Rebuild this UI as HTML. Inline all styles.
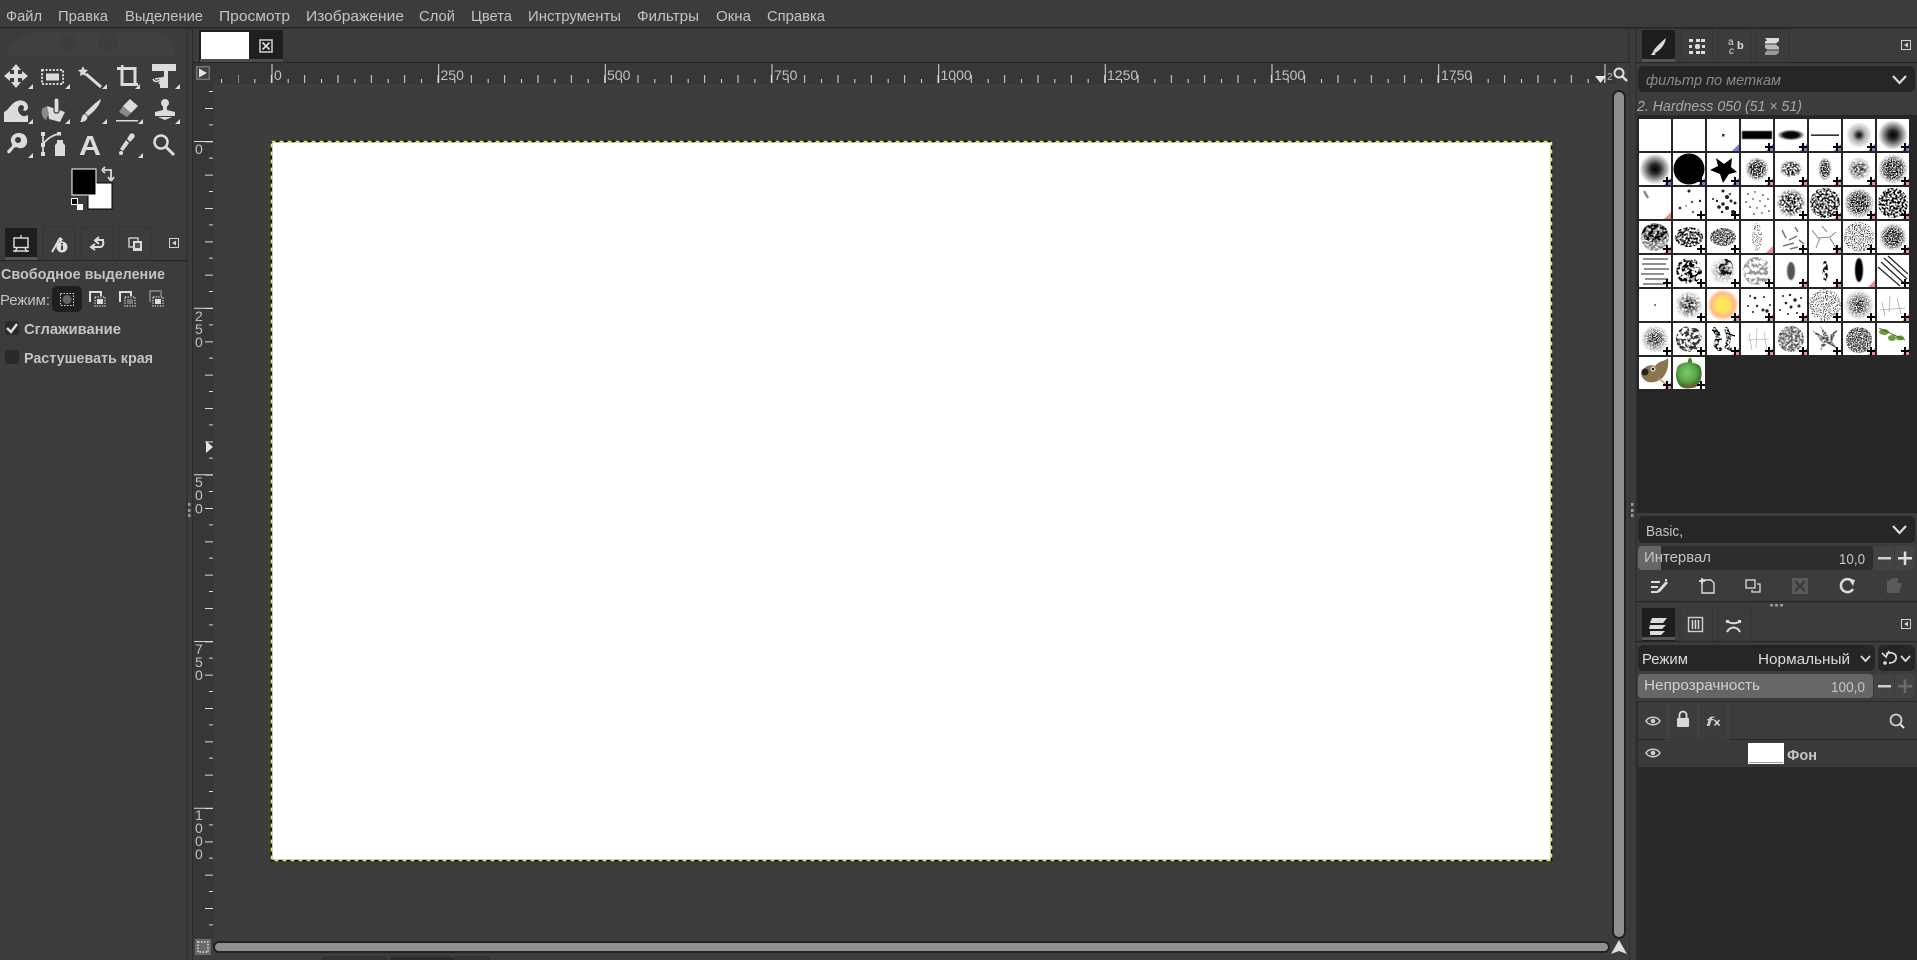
<!DOCTYPE html>
<html lang="ru"><head><meta charset="utf-8"><title>GNU Image Manipulation Program</title>
<style>
html,body{margin:0;padding:0;background:#3c3c3c;width:1917px;height:960px;overflow:hidden}
svg{display:block;position:absolute;left:0;top:0;font-family:"Liberation Sans","DejaVu Sans",sans-serif}
text{font-size:15px;fill:#c4c4c4}
.b{font-weight:bold}.i{font-style:italic}
.r{font-size:14px;fill:#bcc2c6}
.ic{fill:#dcdcdc}.st{fill:none;stroke:#dcdcdc}
</style></head><body>
<svg width="1917" height="960" viewBox="0 0 1917 960" xmlns="http://www.w3.org/2000/svg">
<defs>
<radialGradient id="s1"><stop offset="0" stop-color="#000"/><stop offset=".3" stop-color="#000" stop-opacity=".85"/><stop offset="1" stop-color="#000" stop-opacity="0"/></radialGradient>
<radialGradient id="s2"><stop offset="0" stop-color="#000"/><stop offset=".55" stop-color="#000" stop-opacity=".95"/><stop offset="1" stop-color="#000" stop-opacity="0"/></radialGradient>
<radialGradient id="s3"><stop offset="0" stop-color="#000"/><stop offset=".2" stop-color="#111" stop-opacity=".8"/><stop offset=".5" stop-color="#333" stop-opacity=".35"/><stop offset="1" stop-color="#000" stop-opacity="0"/></radialGradient>
<radialGradient id="sun"><stop offset="0" stop-color="#ffec5a"/><stop offset=".45" stop-color="#ffe060"/><stop offset=".75" stop-color="#ffb98a"/><stop offset="1" stop-color="#fff"/></radialGradient>
<radialGradient id="pep" cx=".45" cy=".4"><stop offset="0" stop-color="#7ccb70"/><stop offset=".7" stop-color="#5aa548"/><stop offset="1" stop-color="#3f7a35"/></radialGradient>
<filter id="f1" x="0" y="0" width="1" height="1" color-interpolation-filters="sRGB"><feTurbulence type="fractalNoise" baseFrequency=".8" numOctaves="2" seed="2" result="n"/><feColorMatrix in="n" values="0 0 0 0 0 0 0 0 0 0 0 0 0 0 0 7 0 0 0 -2.800" result="m"/><feComposite in="SourceGraphic" in2="m" operator="in"/><feGaussianBlur stdDeviation=".3"/></filter>
<filter id="f2" x="0" y="0" width="1" height="1" color-interpolation-filters="sRGB"><feTurbulence type="fractalNoise" baseFrequency=".5" numOctaves="2" seed="7" result="n"/><feColorMatrix in="n" values="0 0 0 0 0 0 0 0 0 0 0 0 0 0 0 9 0 0 0 -4" result="m"/><feComposite in="SourceGraphic" in2="m" operator="in"/><feGaussianBlur stdDeviation=".3"/></filter>
<filter id="f3" x="0" y="0" width="1" height="1" color-interpolation-filters="sRGB"><feTurbulence type="fractalNoise" baseFrequency=".28" numOctaves="2" seed="11" result="n"/><feColorMatrix in="n" values="0 0 0 0 0 0 0 0 0 0 0 0 0 0 0 8 0 0 0 -3.600" result="m"/><feComposite in="SourceGraphic" in2="m" operator="in"/><feGaussianBlur stdDeviation=".35"/></filter>
<filter id="f4" x="0" y="0" width="1" height="1" color-interpolation-filters="sRGB"><feTurbulence type="fractalNoise" baseFrequency=".45" numOctaves="3" seed="5" result="n"/><feColorMatrix in="n" values="0 0 0 0 0 0 0 0 0 0 0 0 0 0 0 3 0 0 0 -.9" result="m"/><feComposite in="SourceGraphic" in2="m" operator="in"/><feGaussianBlur stdDeviation=".35"/></filter>
<filter id="f5" x="0" y="0" width="1" height="1" color-interpolation-filters="sRGB"><feTurbulence type="fractalNoise" baseFrequency=".9" numOctaves="1" seed="13" result="n"/><feColorMatrix in="n" values="0 0 0 0 0 0 0 0 0 0 0 0 0 0 0 12 0 0 0 -6.400" result="m"/><feComposite in="SourceGraphic" in2="m" operator="in"/><feGaussianBlur stdDeviation=".25"/></filter>
<filter id="bl"><feGaussianBlur stdDeviation=".6"/></filter>
<g id="pl"><path d="M24 28h8M28 24v8" stroke="#000" stroke-width="2" fill="none"/></g>
<path id="tb" d="M25 32L32 25V32Z" fill="#6f7fd8"/>
<path id="tr" d="M25 32L32 25V32Z" fill="#e98d8d"/>
<path id="tri" d="M0 5L5 0V5Z" fill="#dcdcdc"/>
<g id="mn"><rect x=".5" y=".5" width="9" height="9" fill="none" stroke="#cfcfcf"/><path d="M7 2.500V7.500L3 5Z" fill="#cfcfcf"/></g>
<g id="eye"><path d="M-7 0C-4-5 4-5 7 0C4 5-4 5-7 0Z" fill="none" stroke="#ccc" stroke-width="1.500"/><circle r="2.300" fill="#ccc"/></g>
</defs>

<rect width="1917" height="960" fill="#3c3c3c"/>
<!-- menu -->
<rect x="0" y="27" width="1917" height="1.500" fill="#252525"/>
<text x="6" y="21" textLength="36" lengthAdjust="spacingAndGlyphs">Файл</text>
<text x="58" y="21" textLength="50" lengthAdjust="spacingAndGlyphs">Правка</text>
<text x="125" y="21" textLength="78" lengthAdjust="spacingAndGlyphs">Выделение</text>
<text x="219" y="21" textLength="71" lengthAdjust="spacingAndGlyphs">Просмотр</text>
<text x="306" y="21" textLength="98" lengthAdjust="spacingAndGlyphs">Изображение</text>
<text x="419" y="21" textLength="36" lengthAdjust="spacingAndGlyphs">Слой</text>
<text x="471" y="21" textLength="41" lengthAdjust="spacingAndGlyphs">Цвета</text>
<text x="528" y="21" textLength="93" lengthAdjust="spacingAndGlyphs">Инструменты</text>
<text x="637" y="21" textLength="62" lengthAdjust="spacingAndGlyphs">Фильтры</text>
<text x="716" y="21" textLength="35" lengthAdjust="spacingAndGlyphs">Окна</text>
<text x="767" y="21" textLength="58" lengthAdjust="spacingAndGlyphs">Справка</text>

<!-- faint wilber watermark -->
<path d="M8 56C10 38 30 30 50 32H150C172 32 176 44 175 56Z" fill="#404040"/>
<circle cx="68" cy="43" r="9" fill="#3d3d3d"/><circle cx="108" cy="43" r="10" fill="#3d3d3d"/>

<!-- tool icons -->
<path class="ic" d="M16 64L21 70H18V74H22V71L28 76L22 81V78H18V82H21L16 88L11 82H14V78H10V81L4 76L10 71V74H14V70H11Z"/>
<rect x="42" y="70" width="21" height="14" fill="none" stroke="#dcdcdc" stroke-width="2" stroke-dasharray="2 1.600"/><rect x="46" y="73.500" width="13" height="7" fill="#dcdcdc"/>
<path class="st" d="M86 74L101 87" stroke-width="3"/><path class="ic" d="M83 66L84.500 69.500L88 70L85.500 72.500L86 76L83 74.500L80 76L80.500 72.500L78 70L81.500 69.500Z"/>
<path class="st" d="M117 68.500H135V86M122 65V84.500H138" stroke-width="3"/><rect x="117" y="65" width="4" height="2" fill="#3c3c3c"/>
<path class="ic" d="M152 64H176V71H168V88H160V82L164 76V71H152Z"/><path class="st" d="M153 79C155 83 158 82 162 78M159 84L162 78L155 79" stroke-width="1.500"/>
<path class="ic" d="M4 122V112C9 110 11 103 17 101C22 99 28 102 28 107C28 110 25 112 23 110C25 108 24 105 21 105C17 106 17 112 21 115C23 117 26 116 28 115V122Z"/>
<path class="ic" d="M47 106L65 112L60 122L49 119Z"/><rect x="54" y="98" width="5" height="15" rx="2" fill="#dcdcdc" stroke="#3c3c3c" stroke-width="1.200"/><path d="M46 106L42 109C41 113 42 118 46 120L49 113Z" fill="#8a8a8a"/>
<path class="ic" d="M101 99C100 105 94 112 88 116L85 113C90 108 96 102 101 99Z"/><path class="ic" d="M84 114C87 115 88 117 87 119C85 122 82 122 80 122C82 120 81 116 84 114Z"/>
<path class="ic" d="M130 99L138 106L131 113L123 106Z"/><path d="M123 106L131 113L127 117L119 112Z" fill="#8a8a8a"/><rect x="116" y="120" width="22" height="1.500" fill="#dcdcdc"/>
<circle cx="165" cy="103" r="4" fill="#dcdcdc"/><path class="ic" d="M163 106H167V110L175 112V116H155V112L163 110Z"/><path d="M158 117H172L165 120Z" fill="#dcdcdc"/>
<path class="ic" fill-rule="evenodd" d="M19 133C25 133 28 138 27 143C26 147 22 149 19 148C17 147 15 147 14 148L10 153C8 154 6 152 8 150L12 146C13 144 10 142 11 139C12 135 15 133 19 133ZM18 137A3 3 0 1 0 18.100 137Z"/>
<path class="st" d="M43 135V155M43 144C47 139 52 135 59 134" stroke-width="1.700"/><rect x="41" y="132" width="4" height="4" fill="#dcdcdc"/><rect x="41" y="143" width="4" height="4" fill="#dcdcdc"/><rect x="41" y="152" width="4" height="4" fill="#dcdcdc"/><rect x="57" y="132" width="4" height="3.500" fill="#dcdcdc"/>
<path class="ic" d="M57 140H63V143L65 145V156H55V145L57 143Z"/>
<text x="79" y="155" class="b" style="font-size:28px;fill:#dcdcdc" textLength="22" lengthAdjust="spacingAndGlyphs">A</text>
<path class="ic" d="M130 134C133 132 136 135 134 138L130 142L127 139ZM126 140L129 143L123 151L120 149Z"/><circle cx="121" cy="153" r="2" fill="#dcdcdc"/>
<circle cx="161" cy="142" r="6.500" fill="none" stroke="#dcdcdc" stroke-width="2.500"/><path class="st" d="M166 147L174 155" stroke-width="3"/>
<use href="#tri" x="28" y="84"/><use href="#tri" x="65" y="84"/><use href="#tri" x="102" y="84"/><use href="#tri" x="135" y="84"/><use href="#tri" x="175" y="84"/>
<use href="#tri" x="28" y="119"/><use href="#tri" x="65" y="119"/><use href="#tri" x="102" y="119"/><use href="#tri" x="138" y="119"/><use href="#tri" x="175" y="119"/>
<use href="#tri" x="28" y="153"/><use href="#tri" x="138" y="153"/>

<!-- fg/bg -->
<rect x="88" y="183" width="24" height="26" fill="#fff" stroke="#000" stroke-width="1"/>
<rect x="72" y="169" width="24" height="26" fill="#000" stroke="#fff" stroke-width="1"/>
<path class="st" d="M104 170H111V179M102 170L105 167M102 170L105 173M111 181L108 177M111 181L114 177" stroke-width="1.800"/>
<rect x="77" y="204" width="6" height="6" fill="#fff"/><rect x="71.500" y="198.500" width="6" height="6" fill="#000" stroke="#fff"/>

<!-- tool option tabs -->
<rect x="0" y="260" width="187" height="1.200" fill="#252525"/>
<rect x="5" y="228" width="32" height="32" fill="#1e1e1e"/><rect x="5" y="257" width="32" height="3" fill="#555"/>
<g fill="none" stroke="#3c3c3c"><rect x="43" y="227" width="32" height="34" stroke="#333"/><rect x="81" y="227" width="32" height="34" stroke="#333"/><rect x="119" y="227" width="32" height="34" stroke="#333"/></g>
<rect x="14" y="238" width="14" height="9.500" fill="none" stroke="#e0e0e0" stroke-width="1.400"/><path class="st" d="M13 251H29M17 248L15 252M25 248L27 252M21 235V238" stroke-width="1.400"/>
<path class="st" d="M52 252L60 238" stroke-width="2"/><path class="ic" d="M60 237L63 239L61 242L58.500 241Z"/><circle cx="62" cy="247" r="5.500" fill="#e0e0e0"/><rect x="61" y="245.500" width="2" height="4.500" fill="#3c3c3c"/><rect x="61" y="243" width="2" height="1.500" fill="#3c3c3c"/>
<path class="st" d="M104 240H96M99 237L95 240.500L99 244M92 247H100C104 247 104 241 102 240M95 244L91 247L95 250" stroke-width="2"/>
<rect x="129" y="238" width="9" height="9" fill="none" stroke="#dcdcdc" stroke-width="1.300"/><rect x="133" y="241" width="9" height="10" fill="#dcdcdc"/><rect x="135" y="243" width="5" height="5" fill="#555"/>
<use href="#mn" x="169" y="238"/>

<!-- tool options -->
<text x="1" y="279" class="b" textLength="164" lengthAdjust="spacingAndGlyphs">Свободное выделение</text>
<text x="0" y="305" textLength="50" lengthAdjust="spacingAndGlyphs">Режим:</text>
<rect x="52" y="286" width="30" height="26" rx="5" fill="#1f1f1f"/>
<rect x="60.500" y="293.500" width="13" height="12" fill="none" stroke="#ddd" stroke-dasharray="1.500 1.500"/><circle cx="67" cy="299.500" r="4.500" fill="#666"/>
<g fill="none" stroke-width="1.200">
<path d="M90 302V292H101V296" stroke="#ddd" stroke-width="2"/><rect x="95" y="297" width="10" height="9" stroke="#ddd" stroke-dasharray="1.300 1.300"/><rect x="97" y="299" width="6" height="5" fill="#ddd" stroke="none"/>
<path d="M120 302V292H131V296" stroke="#ddd" stroke-width="2"/><rect x="125" y="297" width="10" height="9" stroke="#ddd" stroke-dasharray="1.300 1.300"/><rect x="127" y="299" width="6" height="5" fill="#777" stroke="none"/>
<path d="M150 302V291H161V296" stroke="#777" stroke-width="2"/><rect x="153" y="297" width="10" height="9" stroke="#ddd" stroke-dasharray="1.300 1.300"/><rect x="155" y="299" width="6" height="5" fill="#ddd" stroke="none"/>
</g>
<rect x="5" y="321" width="14" height="14" rx="3" fill="#292929"/><path class="st" d="M7 328L11 332L17 324" stroke-width="2.500"/>
<text x="24" y="334" class="b" textLength="97" lengthAdjust="spacingAndGlyphs">Сглаживание</text>
<rect x="5" y="350" width="14" height="14" rx="3" fill="#292929"/>
<text x="24" y="363" class="b" textLength="129" lengthAdjust="spacingAndGlyphs">Растушевать края</text>

<!-- sashes -->
<rect x="186.500" y="28" width="1" height="932" fill="#2a2a2a"/>
<rect x="192" y="28" width="1" height="932" fill="#2a2a2a"/>
<g fill="#999"><rect x="188" y="503" width="2.500" height="3"/><rect x="188" y="509" width="2.500" height="3"/><rect x="188" y="514" width="2.500" height="3"/>
<rect x="1631" y="503" width="2.500" height="3"/><rect x="1631" y="509" width="2.500" height="3"/><rect x="1631" y="514" width="2.500" height="3"/></g>
<rect x="1628.500" y="28" width="1" height="932" fill="#2a2a2a"/>
<rect x="1635.500" y="28" width="1" height="932" fill="#2a2a2a"/>

<!-- image tab -->
<rect x="193" y="62" width="1436" height="1.200" fill="#252525"/>
<rect x="199" y="30" width="84" height="32" fill="#1f1f1f"/><rect x="200" y="59" width="83" height="3" fill="#4c4c4c"/>
<rect x="201" y="32" width="48" height="27" fill="#fff"/>
<rect x="260" y="40" width="12" height="12" fill="none" stroke="#c8c8c8" stroke-width="1.600"/><path class="st" d="M262.500 42.500L269.500 49.500M269.500 42.500L262.500 49.500" stroke-width="1.600"/>

<!-- canvas area -->
<rect x="193" y="63" width="1436" height="897" fill="#3d3d3d"/>
<rect x="193" y="63" width="1423" height="21" fill="#373737"/>
<rect x="193" y="84" width="21" height="854" fill="#373737"/>
<rect x="196" y="66" width="14" height="14" fill="#6a6a6a"/><rect x="197" y="67" width="12" height="12" fill="#404040" stroke="#999" stroke-width=".5"/><path d="M199 68.500V77.500L207 73Z" fill="#e4e4e4"/>
<!-- top ruler ticks -->
<line x1="238" y1="79" x2="1608" y2="79" stroke="#d8d8d8" stroke-width="8" stroke-dasharray="1 32.333" stroke-dashoffset=".5"/>
<line x1="221" y1="81" x2="1608" y2="81" stroke="#d8d8d8" stroke-width="4" stroke-dasharray="1 32.333"/>
<path d="M272 64V83M438.700 64V83M605.300 64V83M772 64V83M938.700 64V83M1105.300 64V83M1272 64V83M1438.700 64V83M1605 64V83" stroke="#d8d8d8" stroke-width="1"/>
<g>
<text class="r" x="274" y="80">0</text><text class="r" x="440.500" y="80">250</text><text class="r" x="607" y="80">500</text><text class="r" x="774" y="80">750</text><text class="r" x="940.500" y="80">1000</text><text class="r" x="1107" y="80">1250</text><text class="r" x="1274" y="80">1500</text><text class="r" x="1441" y="80">1750</text>
</g>
<rect x="1607" y="64" width="9" height="19" fill="#373737"/><text class="r" x="1607" y="80" style="font-size:10px">2</text>
<path d="M1595 76H1606L1600.500 83Z" fill="#e4e4e4"/>
<circle cx="1619" cy="73" r="4.500" fill="none" stroke="#e0e0e0" stroke-width="2"/><path class="st" d="M1622 76L1627 81" stroke-width="2.500"/>
<!-- left ruler ticks -->
<line x1="211" y1="91" x2="211" y2="938" stroke="#d8d8d8" stroke-width="4" stroke-dasharray="1 32.333"/>
<line x1="209" y1="108" x2="209" y2="938" stroke="#d8d8d8" stroke-width="8" stroke-dasharray="1 32.333"/>
<path d="M194 141.500H213M194 308.200H213M194 474.800H213M194 641.500H213M194 808.200H213" stroke="#d8d8d8" stroke-width="1"/>
<text class="r" x="195" y="154">0</text>
<text class="r" x="195" y="321">2</text><text class="r" x="195" y="334">5</text><text class="r" x="195" y="347">0</text>
<text class="r" x="195" y="487">5</text><text class="r" x="195" y="500">0</text><text class="r" x="195" y="513.500">0</text>
<text class="r" x="195" y="654">7</text><text class="r" x="195" y="667">5</text><text class="r" x="195" y="680">0</text>
<text class="r" x="195" y="820">1</text><text class="r" x="195" y="833">0</text><text class="r" x="195" y="846">0</text><text class="r" x="195" y="859">0</text>
<path d="M206 441V453L213 447Z" fill="#e4e4e4"/>

<!-- image -->
<rect x="271.500" y="141.500" width="1280" height="719" fill="#fff"/>
<rect x="271.500" y="141.500" width="1280" height="719" fill="none" stroke="#000" stroke-width="1.500"/>
<rect x="271.500" y="141.500" width="1280" height="719" fill="none" stroke="#e9f03a" stroke-width="1.500" stroke-dasharray="4 4"/>

<!-- scrollbars -->
<rect x="1613" y="91" width="12" height="847" rx="6" fill="#8f8f8f" stroke="#222" stroke-width="2"/>
<rect x="214" y="942" width="1395" height="10" rx="5" fill="#8f8f8f" stroke="#222" stroke-width="2"/>
<rect x="195" y="939" width="16" height="16" fill="#6a6a6a"/><rect x="198" y="942" width="10" height="10" fill="none" stroke="#ddd" stroke-width="1.500" stroke-dasharray="1.500 1.500"/>
<path d="M1619 940L1627 954L1619 951L1611 954Z" fill="#dedede"/>
<rect x="322" y="957" width="65" height="6" rx="4" fill="#353535" stroke="#2a2a2a"/><rect x="390" y="957" width="63" height="6" rx="4" fill="#2a2a2a" stroke="#2a2a2a"/><rect x="453" y="957" width="37" height="6" rx="4" fill="#353535" stroke="#2a2a2a"/>

<!-- right dock 1 tabs -->
<rect x="1636" y="62" width="281" height="1.200" fill="#252525"/>
<rect x="1642" y="30" width="33" height="32" fill="#1e1e1e"/><rect x="1642" y="59" width="33" height="3" fill="#555"/>
<g fill="none" stroke="#333"><rect x="1680" y="29" width="33" height="33"/><rect x="1718" y="29" width="33" height="33"/><rect x="1756" y="29" width="33" height="33"/></g>
<path class="ic" d="M1666 38C1665 44 1661 50 1655 53L1653 51C1657 46 1661 42 1666 38Z"/><path class="ic" d="M1653 52C1655 52 1656 54 1655 55L1651 55C1652 54 1652 53 1653 52Z"/>
<g fill="#dcdcdc"><rect x="1689" y="39" width="4" height="3"/><rect x="1696" y="39" width="4" height="3"/><rect x="1701" y="39" width="4" height="3"/><rect x="1689" y="45" width="3" height="3"/><rect x="1695" y="44" width="5" height="5" rx="2"/><rect x="1702" y="45" width="3" height="3"/><rect x="1689" y="51" width="4" height="3"/><rect x="1696" y="51" width="4" height="3"/><rect x="1701" y="51" width="4" height="3"/></g>
<text x="1728" y="45" style="font-size:10px;fill:#dcdcdc">a</text><text x="1737" y="49" class="b" style="font-size:11px;fill:#dcdcdc">b</text><text x="1729" y="54" class="i" style="font-size:10px;fill:#dcdcdc">c</text>
<path class="ic" d="M1765 38H1779V41L1776 43.500H1765V41.500L1767 40.500Z"/><path d="M1765 44.500H1776L1779 47V49.500H1767L1765 47.500Z" fill="#bbb"/><path d="M1767 50.500H1779V52.500L1776 55H1765V52.500Z" fill="#999"/>
<use href="#mn" x="1901" y="40"/>

<rect x="1638" y="66" width="277" height="26" rx="5" fill="#262626"/>
<text x="1646" y="85" class="i" style="fill:#8a8a8a" textLength="135" lengthAdjust="spacingAndGlyphs">фильтр по меткам</text>
<path class="st" d="M1893 76L1899.500 83L1906 76" stroke-width="2.200"/>
<text x="1637" y="111" class="i" style="fill:#a8a8a8" textLength="165" lengthAdjust="spacingAndGlyphs">2. Hardness 050 (51 × 51)</text>

<!-- brush grid background -->
<rect x="1637" y="115" width="280" height="398" fill="#262626"/>
<g fill="#fff">
<rect x="1639" y="119" width="32" height="32"/><rect x="1673" y="119" width="32" height="32"/><rect x="1707" y="119" width="32" height="32"/><rect x="1741" y="119" width="32" height="32"/><rect x="1775" y="119" width="32" height="32"/><rect x="1809" y="119" width="32" height="32"/><rect x="1843" y="119" width="32" height="32"/><rect x="1877" y="119" width="32" height="32"/>
<rect x="1639" y="153" width="32" height="32"/><rect x="1673" y="153" width="32" height="32"/><rect x="1707" y="153" width="32" height="32"/><rect x="1741" y="153" width="32" height="32"/><rect x="1775" y="153" width="32" height="32"/><rect x="1809" y="153" width="32" height="32"/><rect x="1843" y="153" width="32" height="32"/><rect x="1877" y="153" width="32" height="32"/>
<rect x="1639" y="187" width="32" height="32"/><rect x="1673" y="187" width="32" height="32"/><rect x="1707" y="187" width="32" height="32"/><rect x="1741" y="187" width="32" height="32"/><rect x="1775" y="187" width="32" height="32"/><rect x="1809" y="187" width="32" height="32"/><rect x="1843" y="187" width="32" height="32"/><rect x="1877" y="187" width="32" height="32"/>
<rect x="1639" y="221" width="32" height="32"/><rect x="1673" y="221" width="32" height="32"/><rect x="1707" y="221" width="32" height="32"/><rect x="1741" y="221" width="32" height="32"/><rect x="1775" y="221" width="32" height="32"/><rect x="1809" y="221" width="32" height="32"/><rect x="1843" y="221" width="32" height="32"/><rect x="1877" y="221" width="32" height="32"/>
<rect x="1639" y="255" width="32" height="32"/><rect x="1673" y="255" width="32" height="32"/><rect x="1707" y="255" width="32" height="32"/><rect x="1741" y="255" width="32" height="32"/><rect x="1775" y="255" width="32" height="32"/><rect x="1809" y="255" width="32" height="32"/><rect x="1843" y="255" width="32" height="32"/><rect x="1877" y="255" width="32" height="32"/>
<rect x="1639" y="289" width="32" height="32"/><rect x="1673" y="289" width="32" height="32"/><rect x="1707" y="289" width="32" height="32"/><rect x="1741" y="289" width="32" height="32"/><rect x="1775" y="289" width="32" height="32"/><rect x="1809" y="289" width="32" height="32"/><rect x="1843" y="289" width="32" height="32"/><rect x="1877" y="289" width="32" height="32"/>
<rect x="1639" y="323" width="32" height="32"/><rect x="1673" y="323" width="32" height="32"/><rect x="1707" y="323" width="32" height="32"/><rect x="1741" y="323" width="32" height="32"/><rect x="1775" y="323" width="32" height="32"/><rect x="1809" y="323" width="32" height="32"/><rect x="1843" y="323" width="32" height="32"/><rect x="1877" y="323" width="32" height="32"/>
<rect x="1639" y="357" width="32" height="32"/><rect x="1673" y="357" width="32" height="32"/>
</g>
<!-- row 0 -->
<rect x="1722" y="134" width="2.500" height="2.500" fill="#333"/>
<rect x="1742" y="131" width="30" height="8" fill="#000" filter="url(#bl)"/>
<ellipse cx="1791" cy="135" rx="14" ry="5.500" fill="url(#s2)"/>
<rect x="1811" y="134.500" width="28" height="1.300" fill="#000"/>
<circle cx="1859" cy="135" r="13" fill="url(#s3)"/>
<circle cx="1893" cy="135" r="15" fill="url(#s1)"/>
<!-- row 1 -->
<circle cx="1655" cy="169" r="15.500" fill="url(#s1)"/>
<circle cx="1689" cy="169" r="15.500" fill="#000"/>
<path d="M1716 158L1724 164L1732 158L1731 167L1737 172L1729 174L1723 183L1720 174L1710 170L1718 166Z" fill="#000"/>
<circle cx="1757" cy="169" r="12" fill="url(#s2)" filter="url(#f1)"/>
<ellipse cx="1791" cy="169" rx="12" ry="9" fill="url(#s2)" filter="url(#f2)"/>
<ellipse cx="1825" cy="169" rx="7" ry="12" fill="url(#s2)" filter="url(#f1)"/>
<circle cx="1859" cy="169" r="12" fill="url(#s1)" filter="url(#f4)"/>
<circle cx="1893" cy="169" r="15" fill="url(#s2)" filter="url(#f1)"/>
<!-- row 2 -->
<path d="M1644 191L1648 198" stroke="#888" stroke-width="2.500"/>
<g fill="#222"><circle cx="1689" cy="191" r="1.500"/><circle cx="1680" cy="208" r="1.300"/><circle cx="1686" cy="206" r=".9" fill="#777"/><circle cx="1692" cy="202" r="1.200" fill="#555"/><circle cx="1700" cy="201" r="1.200"/><circle cx="1693" cy="212" r="1.200" fill="#666"/></g>
<g fill="#222"><circle cx="1723" cy="191" r="1.500"/><circle cx="1730" cy="194" r="1.300" fill="#666"/><circle cx="1727" cy="197" r="2"/><circle cx="1717" cy="201" r="1.200"/><circle cx="1723" cy="204" r="1.700"/><circle cx="1731" cy="201" r="1.500"/><circle cx="1719" cy="207" r="1.800"/><circle cx="1727" cy="208" r="2"/><circle cx="1733" cy="212" r="2"/><circle cx="1722" cy="212" r="1.200"/><circle cx="1713" cy="199" r="1"/><circle cx="1735" cy="203" r="1.500"/></g>
<g fill="#000"><circle cx="1748" cy="194" r=".8"/><circle cx="1755" cy="192" r=".7"/><circle cx="1763" cy="195" r=".8"/><circle cx="1746" cy="202" r=".8"/><circle cx="1753" cy="199" r=".7"/><circle cx="1760" cy="201" r=".7"/><circle cx="1768" cy="199" r=".8"/><circle cx="1750" cy="207" r=".8"/><circle cx="1757" cy="208" r=".7"/><circle cx="1765" cy="206" r=".8"/><circle cx="1754" cy="214" r=".8"/><circle cx="1762" cy="213" r=".7"/><circle cx="1769" cy="211" r=".8"/></g>
<circle cx="1791" cy="203" r="15" fill="url(#s2)" filter="url(#f2)"/>
<circle cx="1825" cy="203" r="15" fill="#111" filter="url(#f2)"/>
<circle cx="1859" cy="203" r="15" fill="url(#s2)" filter="url(#f1)"/>
<circle cx="1893" cy="203" r="15" fill="#000" filter="url(#f2)"/>
<!-- row 3 -->
<circle cx="1655" cy="237" r="14" fill="#777" filter="url(#f4)"/><ellipse cx="1655" cy="233" rx="13" ry="9" fill="#000" filter="url(#f3)"/>
<ellipse cx="1689" cy="237" rx="14" ry="10" fill="#000" filter="url(#f2)"/>
<ellipse cx="1723" cy="237" rx="13" ry="9" fill="#333" filter="url(#f1)"/>
<ellipse cx="1757" cy="237" rx="5" ry="14" fill="#555" filter="url(#f5)"/>
<g stroke="#777" stroke-width="1.500"><path d="M1782 230L1786 238M1795 227L1798 232M1789 240L1797 236M1799 240L1804 244M1783 246L1794 243M1798 247L1790 249"/></g>
<g stroke="#888" fill="none" stroke-width="1"><path d="M1812 230L1818 238L1830 237L1836 232M1820 238L1816 248M1830 238L1836 248M1822 226L1827 232"/></g>
<circle cx="1859" cy="237" r="15" fill="#222" filter="url(#f5)"/>
<circle cx="1893" cy="237" r="14" fill="url(#s2)" filter="url(#f1)"/>
<!-- row 4 -->
<path d="M1643 259H1668M1642 264H1666M1644 269H1669M1641 274H1664M1645 279H1668M1643 284H1665" stroke="#222" stroke-width="1.100" fill="none"/>
<circle cx="1689" cy="271" r="13" fill="#000" filter="url(#f3)"/>
<circle cx="1723" cy="271" r="14" fill="url(#s3)" filter="url(#f4)"/><ellipse cx="1726" cy="268" rx="7" ry="9" fill="#111" filter="url(#f3)"/>
<circle cx="1757" cy="271" r="14" fill="#999" filter="url(#f3)"/>
<ellipse cx="1791" cy="271" rx="4" ry="9" fill="#555" filter="url(#bl)"/>
<ellipse cx="1825" cy="271" rx="3" ry="10" fill="#000" filter="url(#f3)"/>
<ellipse cx="1859" cy="270" rx="4" ry="12" fill="#000" filter="url(#bl)"/>
<path d="M1878 267L1900 286M1881 262L1904 283M1884 258L1907 279M1888 256L1908 274" stroke="#222" stroke-width="1.200"/>
<!-- row 5 -->
<circle cx="1655" cy="305" r=".9" fill="#222"/>
<circle cx="1689" cy="305" r="14" fill="url(#s1)" filter="url(#f4)"/>
<rect x="1707" y="289" width="32" height="32" fill="#fff"/><circle cx="1723" cy="305" r="16" fill="url(#sun)"/>
<g fill="#222"><circle cx="1750" cy="296" r="1"/><circle cx="1755" cy="298" r="1.300"/><circle cx="1764" cy="297" r="1"/><circle cx="1748" cy="306" r="1"/><circle cx="1757" cy="306" r="1.200"/><circle cx="1763" cy="310" r="1.500"/><circle cx="1767" cy="311" r="1.700"/><circle cx="1753" cy="312" r="1"/><circle cx="1770" cy="305" r="1"/></g>
<g fill="#222"><circle cx="1783" cy="296" r="1"/><circle cx="1790" cy="295" r="1.200"/><circle cx="1786" cy="303" r="1.300"/><circle cx="1795" cy="300" r="1.700"/><circle cx="1799" cy="306" r="1.500"/><circle cx="1791" cy="307" r="1.500"/><circle cx="1780" cy="310" r="1"/><circle cx="1788" cy="314" r="1"/><circle cx="1797" cy="313" r="1"/><circle cx="1801" cy="298" r="1"/></g>
<circle cx="1825" cy="305" r="16" fill="#333" filter="url(#f5)"/>
<circle cx="1859" cy="305" r="15" fill="url(#s1)" filter="url(#f1)"/>
<path d="M1882 302L1885 316M1890 296L1889 312M1897 298L1901 314M1880 310L1905 308" stroke="#aaa" stroke-width=".8" fill="none"/>
<!-- row 6 -->
<circle cx="1655" cy="339" r="14" fill="url(#s1)" filter="url(#f1)"/>
<circle cx="1689" cy="339" r="13" fill="#333" filter="url(#f3)"/>
<path d="M1713 327L1718 335L1716 345L1721 351M1725 327L1729 336L1727 347L1732 350" stroke="#000" stroke-width="4.500" fill="none" filter="url(#f2)"/>
<path d="M1712 330L1720 333M1726 333L1735 336M1715 340L1722 339" stroke="#000" stroke-width="1.300"/>
<path d="M1749 333L1752 350M1757 328L1756 348M1764 332L1767 352M1747 340L1769 339" stroke="#bbb" stroke-width=".8" fill="none"/>
<circle cx="1791" cy="339" r="13" fill="#555" filter="url(#f4)"/>
<path d="M1812 330L1824 337L1820 326L1829 336L1838 329L1832 341L1838 350L1827 343L1820 352L1822 342Z" fill="#444" filter="url(#f4)"/>
<circle cx="1859" cy="340" r="13" fill="#333" filter="url(#f1)"/>
<g fill="#6a9d3f"><ellipse cx="1884" cy="332" rx="5" ry="3"/><ellipse cx="1892" cy="338" rx="4" ry="3"/><ellipse cx="1900" cy="338" rx="4" ry="2.500"/></g><path d="M1879 328L1905 340" stroke="#335a22" stroke-width=".8"/>
<!-- row 7 wilber + pepper -->
<path d="M1641 373C1644 366 1650 364 1655 366C1660 360 1664 362 1668 358C1669 366 1667 372 1664 376C1660 382 1650 384 1646 381C1643 379 1641 376 1641 373Z" fill="#8a7750"/>
<circle cx="1645" cy="372" r="3.500" fill="#222"/><circle cx="1653" cy="369" r="2.500" fill="#ddd"/><circle cx="1653" cy="369" r="1.200" fill="#111"/>
<path d="M1658 378L1667 385" stroke="#c99a50" stroke-width="1.500"/>
<path d="M1688 360L1690 357L1692 360V364H1688Z" fill="#3d8a2f"/>
<path d="M1678 366C1683 361 1694 361 1700 366C1703 372 1702 382 1696 387C1691 389 1683 389 1680 386C1675 380 1675 372 1678 366Z" fill="url(#pep)"/>
<path d="M1684 385C1690 388 1694 386 1696 382C1700 385 1692 389 1684 388Z" fill="#8a4a30"/>
<!-- corners -->
<use href="#tb" x="1707" y="119"/><use href="#tb" x="1741" y="119"/><use href="#tb" x="1775" y="119"/><use href="#tb" x="1809" y="119"/><use href="#tb" x="1843" y="119"/><use href="#tb" x="1877" y="119"/>
<use href="#tb" x="1639" y="153"/><use href="#tb" x="1673" y="153"/><use href="#tb" x="1707" y="153"/>
<use href="#tr" x="1741" y="153"/><use href="#tr" x="1775" y="153"/><use href="#tr" x="1809" y="153"/><use href="#tr" x="1843" y="153"/><use href="#tr" x="1877" y="153"/>
<use href="#tr" x="1639" y="187"/><use href="#tr" x="1809" y="187"/><use href="#tr" x="1843" y="187"/><use href="#tr" x="1877" y="187"/>
<use href="#tr" x="1639" y="221"/><use href="#tr" x="1741" y="221"/><use href="#tr" x="1809" y="221"/><use href="#tr" x="1877" y="221"/>
<use href="#tr" x="1775" y="255"/><use href="#tr" x="1809" y="255"/><use href="#tr" x="1843" y="255"/>
<use href="#tr" x="1707" y="289"/><use href="#tr" x="1741" y="289"/><use href="#tr" x="1775" y="289"/><use href="#tr" x="1877" y="289"/>
<use href="#tr" x="1707" y="323"/><use href="#tr" x="1741" y="323"/><use href="#tr" x="1775" y="323"/><use href="#tr" x="1843" y="323"/><use href="#tr" x="1877" y="323"/>
<use href="#tr" x="1639" y="357"/>
<!-- plus -->
<use href="#pl" x="1741" y="119"/><use href="#pl" x="1775" y="119"/><use href="#pl" x="1809" y="119"/><use href="#pl" x="1843" y="119"/><use href="#pl" x="1877" y="119"/>
<use href="#pl" x="1639" y="153"/><use href="#pl" x="1673" y="153"/><use href="#pl" x="1707" y="153"/><use href="#pl" x="1741" y="153"/><use href="#pl" x="1775" y="153"/><use href="#pl" x="1809" y="153"/><use href="#pl" x="1843" y="153"/><use href="#pl" x="1877" y="153"/>
<use href="#pl" x="1673" y="187"/><use href="#pl" x="1707" y="187"/><use href="#pl" x="1775" y="187"/><use href="#pl" x="1809" y="187"/><use href="#pl" x="1843" y="187"/><use href="#pl" x="1877" y="187"/>
<use href="#pl" x="1639" y="221"/><use href="#pl" x="1673" y="221"/><use href="#pl" x="1707" y="221"/><use href="#pl" x="1775" y="221"/><use href="#pl" x="1809" y="221"/><use href="#pl" x="1843" y="221"/><use href="#pl" x="1877" y="221"/>
<use href="#pl" x="1639" y="255"/><use href="#pl" x="1673" y="255"/><use href="#pl" x="1707" y="255"/><use href="#pl" x="1741" y="255"/><use href="#pl" x="1775" y="255"/><use href="#pl" x="1809" y="255"/><use href="#pl" x="1877" y="255"/>
<use href="#pl" x="1673" y="289"/><use href="#pl" x="1707" y="289"/><use href="#pl" x="1741" y="289"/><use href="#pl" x="1775" y="289"/><use href="#pl" x="1809" y="289"/><use href="#pl" x="1843" y="289"/><use href="#pl" x="1877" y="289"/>
<use href="#pl" x="1639" y="323"/><use href="#pl" x="1673" y="323"/><use href="#pl" x="1707" y="323"/><use href="#pl" x="1741" y="323"/><use href="#pl" x="1775" y="323"/><use href="#pl" x="1809" y="323"/><use href="#pl" x="1843" y="323"/><use href="#pl" x="1877" y="323"/>
<use href="#pl" x="1639" y="357"/><use href="#pl" x="1673" y="357"/>

<!-- Basic dropdown and spin -->
<rect x="1638" y="516" width="277" height="27" rx="5" fill="#262626"/>
<text x="1646" y="536" textLength="37" lengthAdjust="spacingAndGlyphs">Basic,</text>
<path class="st" d="M1893 526L1899.500 533L1906 526" stroke-width="2.200"/>
<rect x="1638" y="546" width="235" height="24" rx="4" fill="#2d2d2d"/>
<path d="M1642 546H1661V570H1642A4 4 0 0 1 1638 566V550A4 4 0 0 1 1642 546Z" fill="#666"/>
<text x="1644" y="562" textLength="67" lengthAdjust="spacingAndGlyphs">Интервал</text>
<text x="1839" y="564" textLength="26" lengthAdjust="spacingAndGlyphs">10,0</text>
<rect x="1874" y="546" width="20" height="24" fill="#434343"/><path d="M1895 546H1911A4 4 0 0 1 1915 550V566A4 4 0 0 1 1911 570H1895Z" fill="#434343"/>
<rect x="1878" y="557" width="13" height="2.500" fill="#cfcfcf"/><path d="M1898 558.300H1912M1905 551.500V565" stroke="#dcdcdc" stroke-width="2.500"/>
<!-- brush action icons -->
<path class="st" d="M1651 582H1660M1651 587H1658M1651 592H1658" stroke-width="2"/><path class="ic" d="M1657 591L1666 581L1668 583L1660 592L1656.500 593Z"/><rect x="1665" y="579" width="2" height="2" fill="#dcdcdc"/>
<path class="st" d="M1702 580H1711L1714 583V593H1702Z" stroke-width="1.400"/><path class="st" d="M1699 581H1705M1702 578V584" stroke-width="1.800"/>
<rect x="1746" y="580" width="9" height="8" fill="none" stroke="#dcdcdc" stroke-width="1.300"/><path class="st" d="M1757 584H1760V592H1752V590" stroke-width="1.300"/>
<rect x="1792" y="578" width="16" height="16" fill="#5a5a5a"/><path d="M1795 581L1805 591M1805 581L1795 591" stroke="#3c3c3c" stroke-width="2.500"/>
<path class="st" d="M1852 581A6.500 6.500 0 1 0 1853 589" stroke-width="2.500"/><path class="ic" d="M1848 578L1855 580L1853 586Z"/>
<path d="M1887 593V581L1893 578H1898V583H1902L1899 593Z" fill="#5a5a5a"/>

<rect x="1636" y="601" width="281" height="1.200" fill="#252525"/>
<g fill="#999"><rect x="1770" y="604" width="3" height="2.500"/><rect x="1775" y="604" width="3" height="2.500"/><rect x="1780" y="604" width="3" height="2.500"/></g>

<!-- layers tabs -->
<rect x="1636" y="641" width="281" height="1.200" fill="#252525"/>
<rect x="1642" y="608" width="33" height="33" fill="#1e1e1e"/><rect x="1642" y="637" width="33" height="3" fill="#555"/>
<g fill="none" stroke="#333"><rect x="1680" y="608" width="33" height="33"/><rect x="1718" y="608" width="33" height="33"/></g>
<path class="ic" d="M1652 618H1667L1663 623H1650ZM1650 625H1666L1662 629H1649ZM1650 631H1665L1661 635H1650Z"/>
<rect x="1688.500" y="617.500" width="14" height="14" fill="none" stroke="#d0d0d0" stroke-width="1.400"/><path class="st" d="M1692.500 620V629M1695.500 620V629M1698.500 620V629" stroke-width="1.500"/>
<path class="st" d="M1726 621C1732 624 1736 624 1741 621" stroke-width="2"/><path class="st" d="M1727 632C1730 626 1737 626 1740 632" stroke-width="2"/><rect x="1726" y="620" width="3" height="3" fill="#dcdcdc"/><rect x="1738" y="620" width="3" height="3" fill="#dcdcdc"/>
<use href="#mn" x="1901" y="619"/>

<!-- mode -->
<rect x="1638" y="645" width="237" height="26" rx="5" fill="#262626"/>
<text x="1642" y="664" style="fill:#dcdcdc" textLength="46" lengthAdjust="spacingAndGlyphs">Режим</text>
<text x="1758" y="664" style="fill:#dcdcdc" textLength="92" lengthAdjust="spacingAndGlyphs">Нормальный</text>
<path class="st" d="M1861 656L1865.500 661L1870 656" stroke-width="1.800"/>
<rect x="1878" y="645" width="37" height="26" rx="5" fill="#262626"/>
<path class="st" d="M1886 654C1892 651 1897 654 1896 659C1895 662 1892 663 1889 663M1882 653L1886 657L1889 651" stroke-width="1.700"/><circle cx="1885" cy="663" r="1.800" fill="#dcdcdc"/>
<path class="st" d="M1901 656L1905.500 661L1910 656" stroke-width="1.800"/>
<!-- opacity -->
<rect x="1638" y="674" width="235" height="24" rx="4" fill="#666"/>
<text x="1644" y="690" style="fill:#d0d0d0" textLength="116" lengthAdjust="spacingAndGlyphs">Непрозрачность</text>
<text x="1831" y="692" textLength="34" lengthAdjust="spacingAndGlyphs">100,0</text>
<rect x="1874" y="674" width="20" height="24" fill="#434343"/><path d="M1895 674H1911A4 4 0 0 1 1915 678V694A4 4 0 0 1 1911 698H1895Z" fill="#434343"/>
<rect x="1878" y="685" width="13" height="2.500" fill="#cfcfcf"/><path d="M1898 686.300H1912M1905 679.500V693" stroke="#6a6a6a" stroke-width="2.500"/>
<!-- layers list -->
<rect x="1637" y="701" width="280" height="259" fill="#292929"/>
<rect x="1638" y="702" width="279" height="37" fill="#3c3c3c"/>
<rect x="1638" y="740" width="279" height="27" fill="#3a3a3a"/>
<path d="M1668 704V739M1698 704V739M1728 704V739" stroke="#484848" stroke-width="1"/>
<path d="M1665 740H1730" stroke="#444"/>
<use href="#eye" x="1653" y="721"/>
<rect x="1677" y="718" width="12" height="9" rx="1" fill="#d8d8d8"/><path class="st" d="M1679.500 718V715A3.500 3.500 0 0 1 1686.500 715V718" stroke-width="1.800"/>
<text x="1706" y="726" class="b i" style="font-size:13px;fill:#ccc" textLength="7" lengthAdjust="spacingAndGlyphs">f</text><path class="st" d="M1714.500 720L1719.500 725.500M1719.500 720L1714.500 725.500" stroke-width="1.500"/>
<circle cx="1896" cy="720" r="5.500" fill="none" stroke="#d0d0d0" stroke-width="1.800"/><path class="st" d="M1900 724L1904 728" stroke-width="2"/>
<use href="#eye" x="1653" y="753"/>
<rect x="1748" y="743" width="36" height="21" fill="#fff"/><rect x="1749" y="762" width="34" height="1" fill="#999"/>
<text x="1787" y="760" class="b" textLength="30" lengthAdjust="spacingAndGlyphs">Фон</text>
</svg>
</body></html>
